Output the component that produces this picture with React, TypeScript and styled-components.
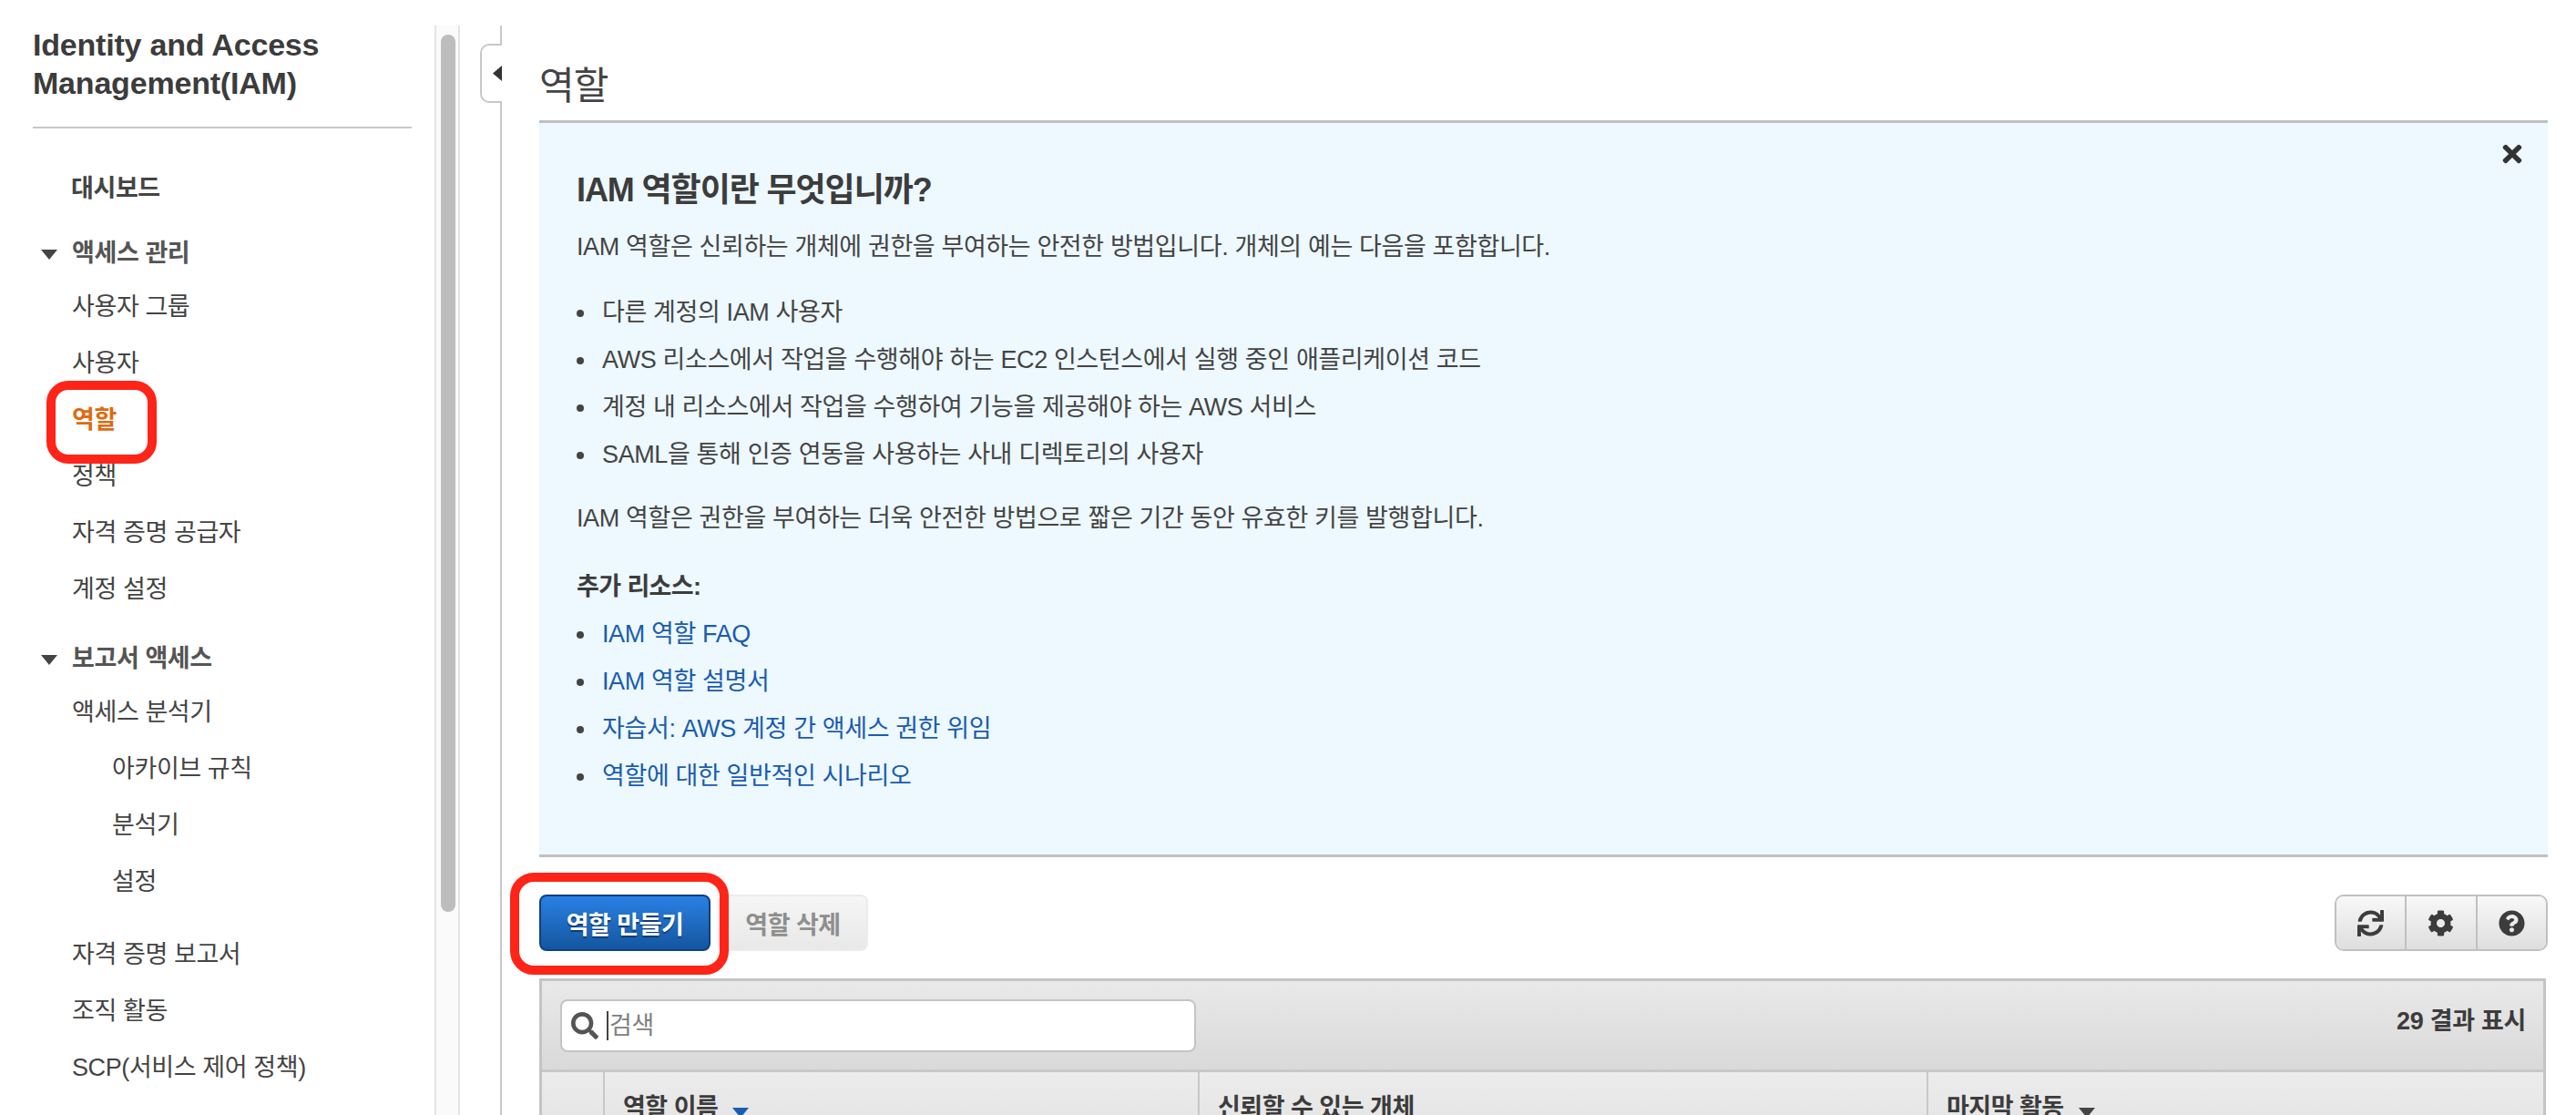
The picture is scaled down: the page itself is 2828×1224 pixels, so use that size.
import React from "react"
import styled, { createGlobalStyle } from "styled-components"
import { FaCog, FaQuestionCircle, FaSearch, FaSync, FaTimes } from "react-icons/fa"

const GlobalStyle = createGlobalStyle`
  html, body {
    margin: 0;
    padding: 0;
    background: #fff;
  }
  body {
    font-family: "Liberation Sans", "Noto Sans CJK KR", sans-serif;
    color: #444;
  }
  * {
    box-sizing: border-box;
  }
`

const navRows = [
	{ label: "대시보드", kind: "top" },
	{ label: "액세스 관리", kind: "group", gap: 12 },
	{ label: "사용자 그룹", kind: "item" },
	{ label: "사용자", kind: "item" },
	{ label: "역할", kind: "active" },
	{ label: "정책", kind: "item" },
	{ label: "자격 증명 공급자", kind: "item" },
	{ label: "계정 설정", kind: "item" },
	{ label: "보고서 액세스", kind: "group", gap: 17 },
	{ label: "액세스 분석기", kind: "item" },
	{ label: "아카이브 규칙", kind: "sub" },
	{ label: "분석기", kind: "sub" },
	{ label: "설정", kind: "sub" },
	{ label: "자격 증명 보고서", kind: "item", gap: 18 },
	{ label: "조직 활동", kind: "item" },
	{ label: "SCP(서비스 제어 정책)", kind: "item" },
]

const principals = [
	"다른 계정의 IAM 사용자",
	"AWS 리소스에서 작업을 수행해야 하는 EC2 인스턴스에서 실행 중인 애플리케이션 코드",
	"계정 내 리소스에서 작업을 수행하여 기능을 제공해야 하는 AWS 서비스",
	"SAML을 통해 인증 연동을 사용하는 사내 디렉토리의 사용자",
]

const resources = [
	"IAM 역할 FAQ",
	"IAM 역할 설명서",
	"자습서: AWS 계정 간 액세스 권한 위임",
	"역할에 대한 일반적인 시나리오",
]

export default function App() {
	return (
		<Page>
			<GlobalStyle />
			<Sidebar>
				<SideTitle>Identity and Access<br />Management(IAM)</SideTitle>
				<Nav>
					{navRows.map((row) => (
						<NavRow key={row.label} $kind={row.kind} $gap={row.gap ?? 0}>
							{row.kind === "group" && <GroupCaret />}
							{row.label}
							{row.kind === "active" && <NavRing />}
						</NavRow>
					))}
				</Nav>
			</Sidebar>
			<ScrollTrack>
				<ScrollThumb />
			</ScrollTrack>
			<Main>
				<CollapseTab>
					<svg width="10" height="17" viewBox="0 0 10 17"><path d="M10 0v17L0 8.5z" fill="#333" /></svg>
				</CollapseTab>
				<Heading>역할</Heading>
				<InfoBox>
					<CloseIcon><FaTimes /></CloseIcon>
					<InfoTitle>IAM 역할이란 무엇입니까?</InfoTitle>
					<InfoText>IAM 역할은 신뢰하는 개체에 권한을 부여하는 안전한 방법입니다. 개체의 예는 다음을 포함합니다.</InfoText>
					<BulletList $top={28}>
						{principals.map((text) => <li key={text}>{text}</li>)}
					</BulletList>
					<InfoText $top={26}>IAM 역할은 권한을 부여하는 더욱 안전한 방법으로 짧은 기간 동안 유효한 키를 발행합니다.</InfoText>
					<ResourceTitle>추가 리소스:</ResourceTitle>
					<BulletList $top={8}>
						{resources.map((text) => <li key={text}><ResourceLink href="#">{text}</ResourceLink></li>)}
					</BulletList>
				</InfoBox>
				<Actions>
					<PrimaryButton>
						역할 만들기
						<ButtonRing />
					</PrimaryButton>
					<DisabledButton>역할 삭제</DisabledButton>
					<IconGroup>
						<IconButton><FaSync /></IconButton>
						<IconButton><FaCog /></IconButton>
						<IconButton><FaQuestionCircle /></IconButton>
					</IconGroup>
				</Actions>
				<Table>
					<TableToolbar>
						<SearchBox>
							<FaSearch />
							<SearchCaret />
							<SearchInput placeholder="검색" />
						</SearchBox>
						<ResultCount>29 결과 표시</ResultCount>
					</TableToolbar>
					<HeaderRow>
						<HeaderCell $width={67} />
						<HeaderCell $width={653}>역할 이름<SortCaret $color="#1a5cb0" /></HeaderCell>
						<HeaderCell $width={800}>신뢰할 수 있는 개체</HeaderCell>
						<HeaderCell>마지막 활동<SortCaret $color="#444" /></HeaderCell>
					</HeaderRow>
				</Table>
			</Main>
		</Page>
	)
}

const Page = styled.div`
  display: flex;
  height: 1224px;
  padding-top: 28px;
  overflow: hidden;
`

const Sidebar = styled.aside`
  width: 477px;
  flex: none;
  padding: 0 25px 0 36px;
`

const SideTitle = styled.div`
  font-size: 34px;
  line-height: 42px;
  font-weight: bold;
  letter-spacing: -0.2px;
  color: #3c3c3c;
  padding-bottom: 27px;
  border-bottom: 2px solid #c8c8c8;
`

const Nav = styled.nav`
  padding-top: 32px;
`

const rowPadding: Record<string, number> = { top: 42, group: 43, item: 43, active: 43, sub: 87 }

const NavRow = styled.div<{ $kind: string; $gap: number }>`
  position: relative;
  display: flex;
  align-items: center;
  height: ${(p) => (p.$kind === "group" ? 56 : 62)}px;
  margin-top: ${(p) => p.$gap}px;
  padding-left: ${(p) => rowPadding[p.$kind]}px;
  font-size: 27px;
  letter-spacing: -0.4px;
  font-weight: ${(p) => (p.$kind === "item" || p.$kind === "sub" ? "normal" : "bold")};
  color: ${(p) => (p.$kind === "active" ? "#dd6b10" : p.$kind === "group" ? "#555" : "#444")};
`

const GroupCaret = styled.span`
  position: absolute;
  left: 9px;
  top: 27px;
  width: 0;
  height: 0;
  border-left: 9px solid transparent;
  border-right: 9px solid transparent;
  border-top: 11px solid #444;
`

const NavRing = styled.span`
  position: absolute;
  left: 15px;
  top: -9px;
  width: 121px;
  height: 91px;
  border: 10px solid #fe2418;
  border-radius: 24px;
`

const ScrollTrack = styled.div`
  width: 28px;
  flex: none;
  height: 1224px;
  padding: 10px 5px 0;
  background: #fafafa;
  border-left: 2px solid #e4e4e4;
  border-right: 2px solid #e4e4e4;
`

const ScrollThumb = styled.div`
  width: 16px;
  height: 963px;
  border-radius: 8px;
  background: #bdbdbd;
`

const Main = styled.main`
  position: relative;
  flex: 1;
  min-width: 0;
  margin-left: 44px;
  padding: 0 31px 0 41px;
  border-left: 2px solid #c8c8c8;
`

const CollapseTab = styled.div`
  position: absolute;
  left: -24px;
  top: 20px;
  display: flex;
  align-items: center;
  justify-content: flex-end;
  width: 24px;
  height: 65px;
  background: #fff;
  border: 2px solid #c8c8c8;
  border-right: none;
  border-radius: 10px 0 0 10px;
`

const Heading = styled.h1`
  margin: 0;
  padding: 44px 0 14px;
  font-size: 42px;
  line-height: 46px;
  font-weight: normal;
  letter-spacing: -1px;
  color: #444;
`

const InfoBox = styled.section`
  position: relative;
  padding: 52px 41px 60px;
  background: #edf8ff;
  border-top: 3px solid #c0c0c0;
  border-bottom: 3px solid #c0c0c0;
`

const CloseIcon = styled.span`
  position: absolute;
  right: 24px;
  top: 19px;
  display: flex;
  font-size: 30px;
  color: #333;
`

const InfoTitle = styled.h2`
  margin: 0;
  font-size: 36px;
  line-height: 44px;
  letter-spacing: -1.1px;
  color: #3c3c3c;
`

const InfoText = styled.p<{ $top?: number }>`
  margin: ${(p) => p.$top ?? 22}px 0 0;
  font-size: 27px;
  line-height: 36px;
  letter-spacing: -0.38px;
`

const BulletList = styled.ul<{ $top: number }>`
  margin: ${(p) => p.$top}px 0 0;
  padding: 0 0 0 28px;
  list-style: none;
  font-size: 27px;
  line-height: 52px;
  letter-spacing: -0.38px;

  li {
    position: relative;
  }

  li::before {
    content: "";
    position: absolute;
    left: -28px;
    top: 23px;
    width: 8px;
    height: 8px;
    border-radius: 50%;
    background: #444;
  }
`

const ResourceTitle = styled.div`
  margin-top: 39px;
  font-size: 27px;
  line-height: 36px;
  font-weight: bold;
  letter-spacing: -0.6px;
  color: #3c3c3c;
`

const ResourceLink = styled.a`
  color: #1a5cb0;
  text-decoration: none;
`

const Actions = styled.div`
  display: flex;
  align-items: stretch;
  gap: 8px;
  height: 62px;
  margin-top: 41px;
`

const PrimaryButton = styled.button`
  position: relative;
  width: 188px;
  padding: 0;
  border: 2px solid #10407f;
  border-radius: 8px;
  background: linear-gradient(#2a80e4, #14569f);
  color: #fff;
  font: bold 27px "Liberation Sans", "Noto Sans CJK KR", sans-serif;
  letter-spacing: -0.5px;
  text-shadow: 0 2px 1px #0d3b77;
`

const ButtonRing = styled.span`
  position: absolute;
  left: -34px;
  top: -26px;
  width: 240px;
  height: 112px;
  border: 10px solid #fe2418;
  border-radius: 26px;
`

const DisabledButton = styled.button`
  width: 165px;
  padding: 0;
  border: 2px solid #ececec;
  border-radius: 8px;
  background: linear-gradient(#f6f6f6, #e8e8e8);
  color: #8e8e8e;
  font: bold 27px "Liberation Sans", "Noto Sans CJK KR", sans-serif;
  letter-spacing: -0.5px;
`

const IconGroup = styled.div`
  display: flex;
  margin-left: auto;
  width: 234px;
  border: 2px solid #c0c0c0;
  border-radius: 10px;
  overflow: hidden;
`

const IconButton = styled.div`
  flex: 1;
  display: flex;
  align-items: center;
  justify-content: center;
  font-size: 29px;
  color: #3c3c3c;
  background: linear-gradient(#f8f8f8, #dedede);

  & + & {
    border-left: 2px solid #c0c0c0;
  }
`

const Table = styled.div`
  margin: 30px 2px 0 0;
  border: 3px solid #c4c4c4;
  border-bottom: none;
`

const TableToolbar = styled.div`
  display: flex;
  justify-content: space-between;
  align-items: flex-start;
  height: 100px;
  padding: 20px 19px 0 20px;
  background: linear-gradient(#e9e9e9, #d9d9d9);
  border-bottom: 3px solid #c8c8c8;
`

const SearchBox = styled.label`
  display: flex;
  align-items: center;
  width: 698px;
  height: 58px;
  padding-left: 10px;
  background: #fff;
  border: 2px solid #c4c4c4;
  border-radius: 8px;
  color: #555;
  font-size: 30px;
`

const SearchCaret = styled.span`
  width: 2px;
  height: 32px;
  margin: 0 1px 0 9px;
  background: #444;
`

const SearchInput = styled.input`
  flex: 1;
  min-width: 0;
  border: none;
  outline: none;
  padding: 0;
  background: transparent;
  font: 27px "Liberation Sans", "Noto Sans CJK KR", sans-serif;
  letter-spacing: -0.4px;

  &::placeholder {
    color: #808080;
    opacity: 1;
  }
`

const ResultCount = styled.div`
  margin-top: 7px;
  font-size: 27px;
  line-height: 34px;
  font-weight: bold;
  letter-spacing: -0.3px;
  color: #3c3c3c;
`

const HeaderRow = styled.div`
  display: flex;
  height: 80px;
  background: linear-gradient(#ececec, #e2e2e2);
`

const HeaderCell = styled.div<{ $width?: number }>`
  display: flex;
  align-items: flex-start;
  flex: ${(p) => (p.$width ? `0 0 ${p.$width}px` : "1")};
  padding: 23px 0 0 20px;
  font-size: 27px;
  line-height: 32px;
  font-weight: bold;
  letter-spacing: -0.5px;
  color: #3c3c3c;

  & + & {
    border-left: 2px solid #c8c8c8;
  }
`

const SortCaret = styled.span<{ $color: string }>`
  width: 0;
  height: 0;
  margin: 16px 0 0 16px;
  border-left: 9px solid transparent;
  border-right: 9px solid transparent;
  border-top: 11px solid ${(p) => p.$color};
`
